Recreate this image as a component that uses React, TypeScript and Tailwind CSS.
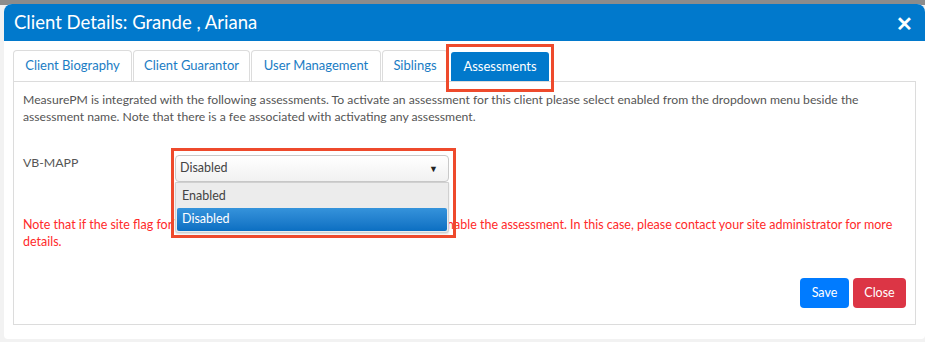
import React from "react";

const font = { fontFamily: 'Lato, "Open Sans", Arial, sans-serif' };

export default function App() {
  const tabs = [
    { t: "Client Biography", w: "w-[119px]" },
    { t: "Client Guarantor", w: "w-[117px]" },
    { t: "User Management", w: "w-[130px]" },
    { t: "Siblings", w: "w-[66px]" },
  ];
  return (
    <div className="relative w-[925px] h-[342px] overflow-hidden bg-[#f2f2f2]" style={font}>
      <div className="h-[5px] w-full bg-[#8c8c8c]" />
      <div className="absolute left-[4px] top-[4px] w-[921px] h-[335px] bg-white rounded-t-[8px] rounded-b-[4px] flex flex-col">
        {/* header */}
        <div className="h-[37px] bg-[#0179cc] rounded-t-[8px] flex items-center justify-between pl-[10px] pr-[12px]">
          <span className="text-white text-[18.5px] leading-none">Client Details: Grande , Ariana</span>
          <span className="text-white text-[20px] font-bold leading-none">✕</span>
        </div>
        {/* body */}
        <div className="pl-[9px] pr-[9px] pt-[9px] flex flex-col">
          <div className="flex items-end h-[31px] gap-[1px]">
            {tabs.map(({ t, w }) => (
              <div
                key={t}
                className={`${w} h-[31px] flex items-center justify-center border border-b-0 border-[#dcdcdc] rounded-t-[4px] text-[13px] text-[#1a7cc4] bg-white`}
              >
                {t}
              </div>
            ))}
            <div className="ml-[2px] w-[98px] h-[29px] flex items-center justify-center rounded-t-[3px] text-[13px] text-white bg-[#0179cc]">
              Assessments
            </div>
          </div>
          <div className="h-[244px] border border-[#dcdcdc] flex flex-col px-[9px] pt-[9px]">
            <p className="text-[12.2px] leading-[17px] text-[#555]">
              MeasurePM is integrated with the following assessments. To activate an assessment for this client please select enabled from the dropdown menu beside the assessment name. Note that there is a fee associated with activating any assessment.
            </p>
            <div className="flex mt-[30px] h-[27px]">
              <div className="w-[152px] text-[12.3px] text-[#555] -mt-[1px]">VB-MAPP</div>
              <div className="relative w-[274px]">
                <div className="h-[27px] border border-[#c9c9c9] rounded-[4px] bg-gradient-to-b from-white to-[#f1f1f1] flex items-center justify-between pl-[4px] pr-[10px] text-[12.5px] text-[#444]">
                  <span>Disabled</span>
                  <span className="text-[9px] text-[#222]">▼</span>
                </div>
                <div className="absolute left-0 top-[27px] w-[274px] bg-[#ececec] border border-[#d0d0d0] rounded-b-[3px] p-[1px] shadow-[0_1px_2px_rgba(0,0,0,0.15)]">
                  <div className="h-[24px] flex items-center pl-[5px] text-[12.5px] text-[#444]">Enabled</div>
                  <div className="h-[23px] flex items-center pl-[5px] text-[12.5px] text-white rounded-[2px] bg-gradient-to-b from-[#3593db] to-[#0a6fc2]">
                    Disabled
                  </div>
                </div>
              </div>
            </div>
            <p className="mt-[34px] text-[12.5px] leading-[17px] text-[#ff2a2a]">
              Note that if the site flag for VB-MAPP is not enabled, you will not be able to enable the assessment. In this case, please contact your site administrator for more details.
            </p>
            <div className="flex justify-end gap-[4px] mt-[28px]">
              <button className="h-[30px] w-[49px] rounded-[4px] bg-[#007bff] text-white text-[12.5px]">Save</button>
              <button className="h-[30px] w-[53px] rounded-[4px] bg-[#dc3545] text-white text-[12.5px]">Close</button>
            </div>
          </div>
        </div>
      </div>
      {/* highlight boxes */}
      <div className="absolute left-[446px] top-[44px] w-[108px] h-[48px] border-[3px] border-[#ee4a2c]" />
      <div className="absolute left-[171px] top-[148px] w-[285px] h-[90px] border-[3px] border-[#ee4a2c]" />
    </div>
  );
}
